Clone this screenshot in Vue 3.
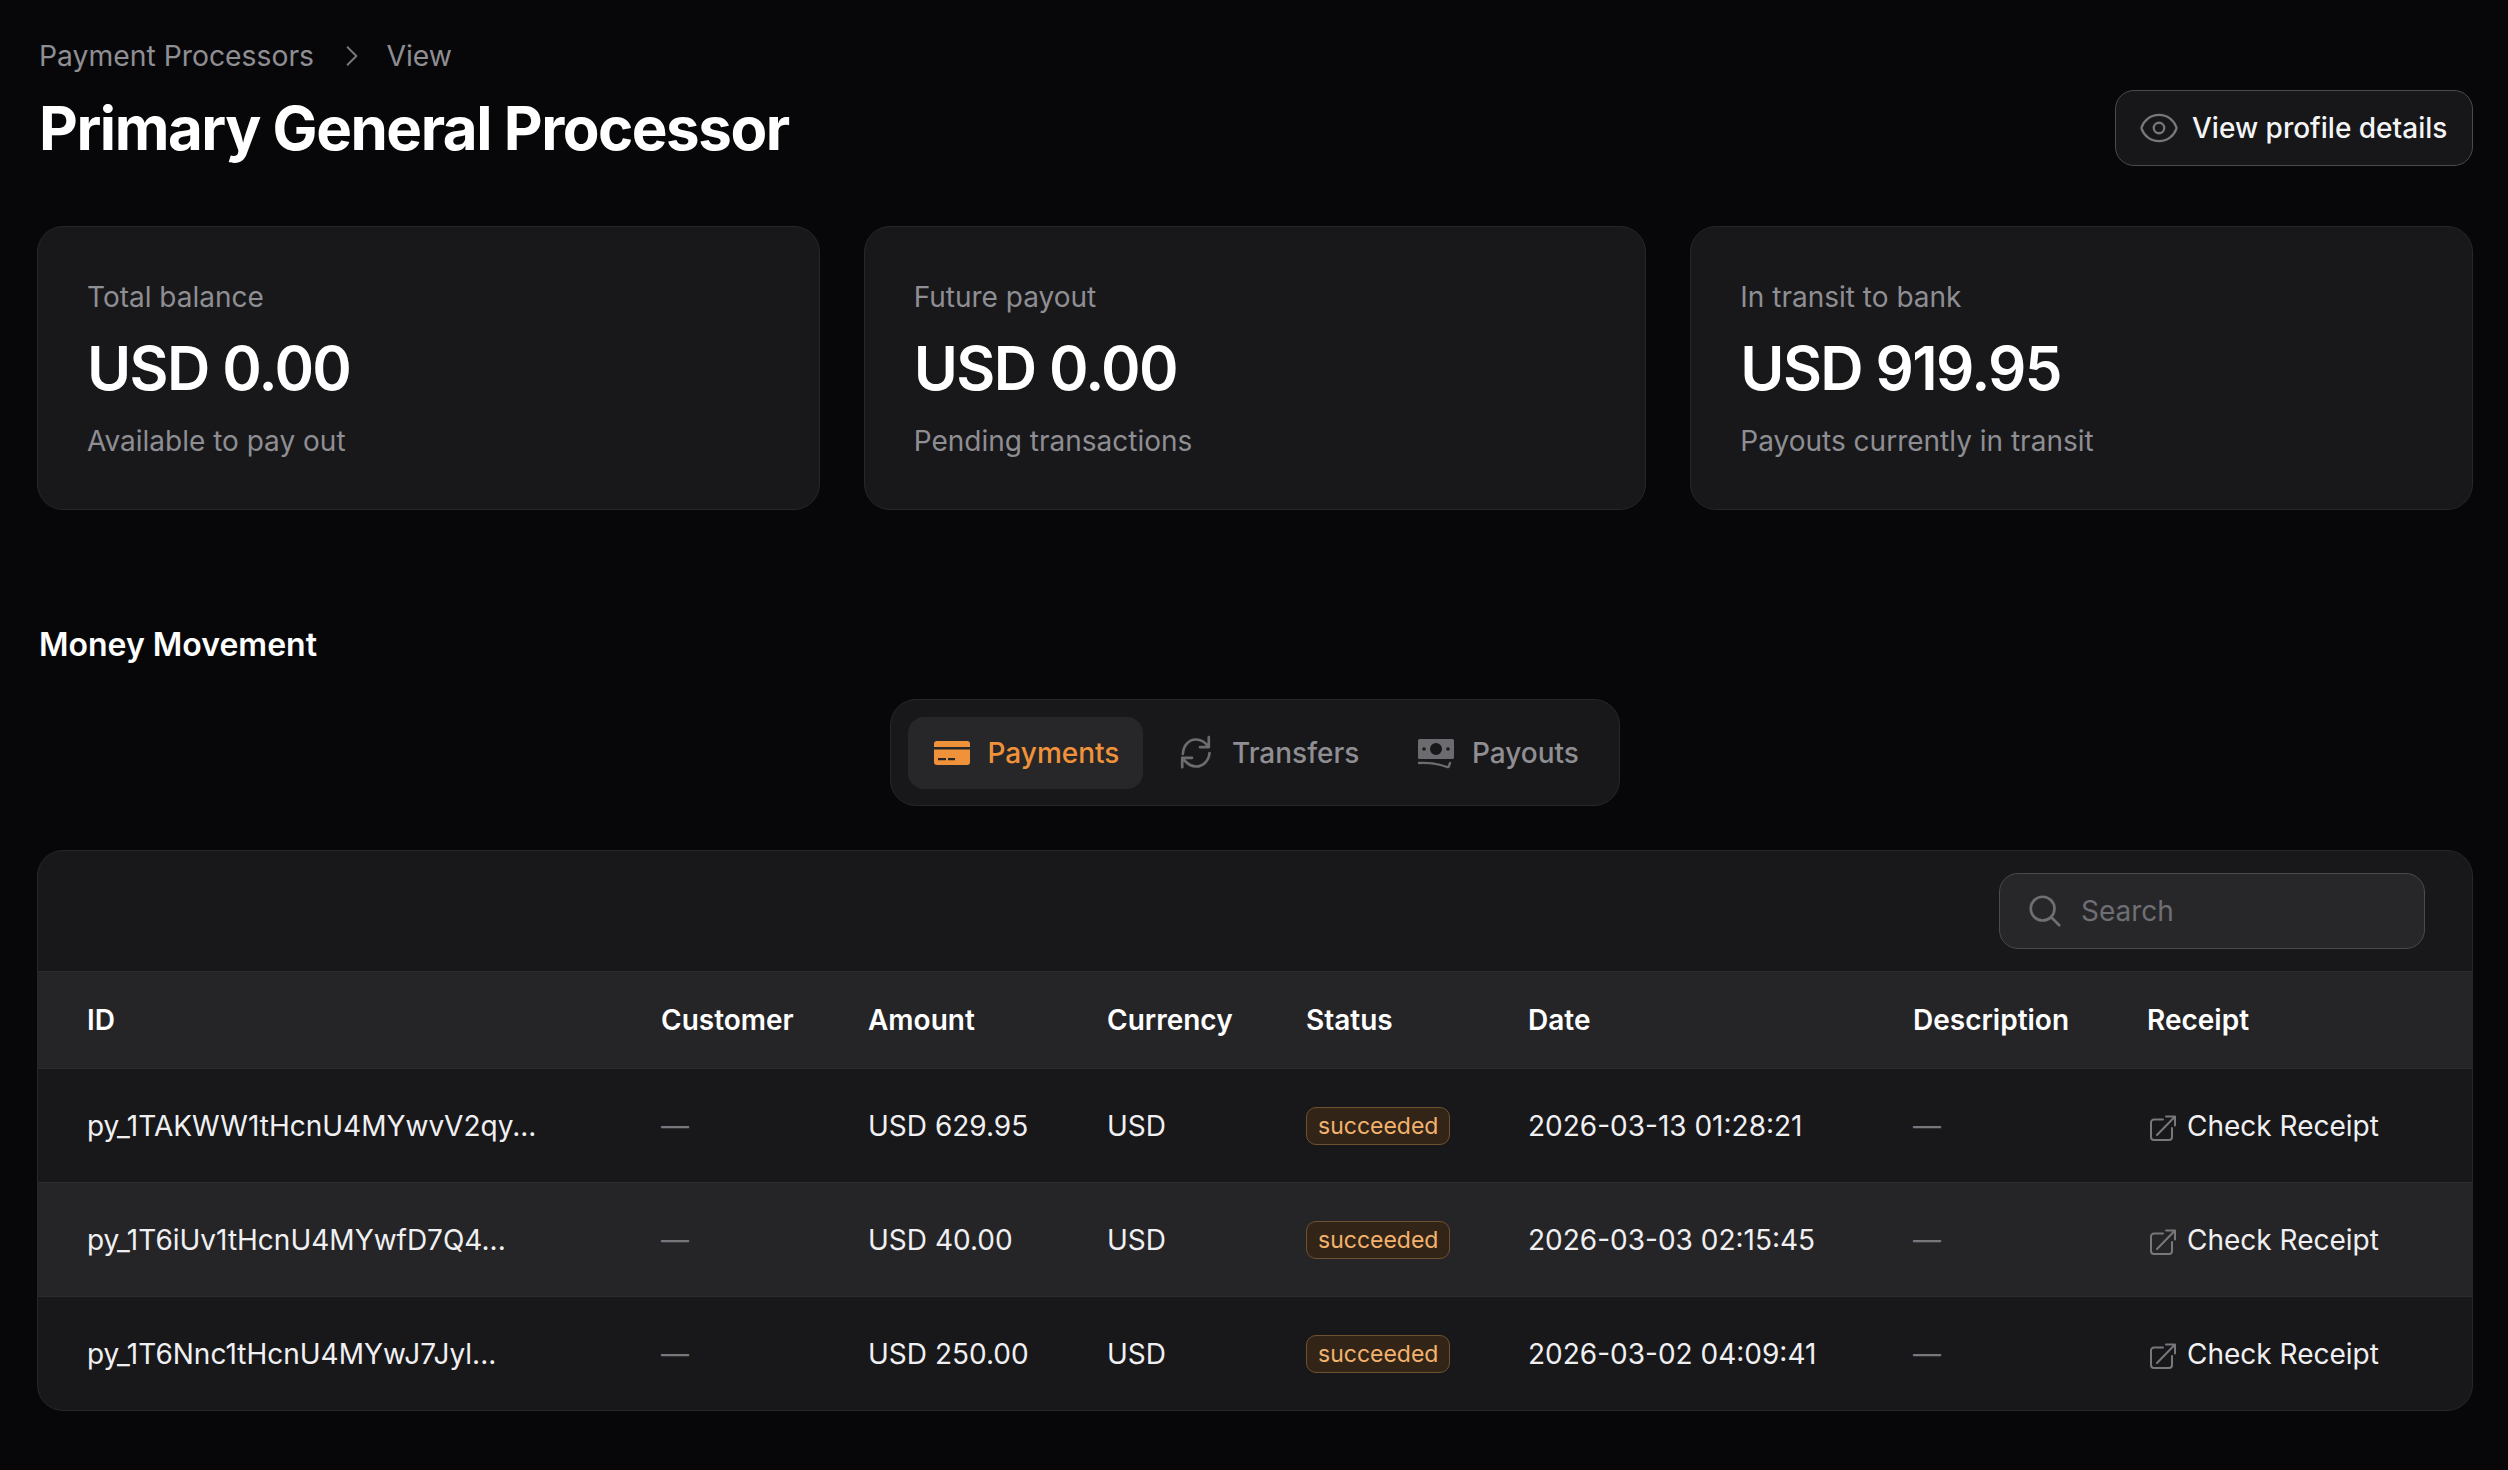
<script setup>
const cards = [
  { label: 'Total balance', value: 'USD 0.00', note: 'Available to pay out' },
  { label: 'Future payout', value: 'USD 0.00', note: 'Pending transactions' },
  { label: 'In transit to bank', value: 'USD 919.95', note: 'Payouts currently in transit' },
]
const headers = ['ID', 'Customer', 'Amount', 'Currency', 'Status', 'Date', 'Description', 'Receipt']
const rows = [
  { id: 'py_1TAKWW1tHcnU4MYwvV2qy...', amount: 'USD 629.95', date: '2026-03-13 01:28:21' },
  { id: 'py_1T6iUv1tHcnU4MYwfD7Q4...', amount: 'USD 40.00', date: '2026-03-03 02:15:45' },
  { id: 'py_1T6Nnc1tHcnU4MYwJ7Jyl...', amount: 'USD 250.00', date: '2026-03-02 04:09:41' },
]
</script>

<template>
  <div class="page">
    <div class="crumbs">
      <span>Payment Processors</span>
      <svg class="chev" viewBox="0 0 24 24" fill="none" stroke="currentColor" stroke-width="1.6" stroke-linecap="round" stroke-linejoin="round"><path d="M8.25 4.5l7.5 7.5-7.5 7.5" /></svg>
      <span>View</span>
    </div>
    <div class="head">
      <h1>Primary General Processor</h1>
      <button class="profile">
        <svg class="eye" viewBox="0 0 24 24" fill="none" stroke="currentColor" stroke-width="1.3" stroke-linecap="round" stroke-linejoin="round"><path d="M2.036 12.322a1.012 1.012 0 0 1 0-.639C3.423 7.51 7.36 4.5 12 4.5c4.638 0 8.573 3.007 9.963 7.178.07.207.07.431 0 .639C20.577 16.49 16.64 19.5 12 19.5c-4.638 0-8.573-3.007-9.963-7.178Z" /><path d="M15 12a3 3 0 1 1-6 0 3 3 0 0 1 6 0Z" /></svg>
        View profile details
      </button>
    </div>

    <div class="cards">
      <div v-for="c in cards" :key="c.label" class="card">
        <div class="label">{{ c.label }}</div>
        <div class="value">{{ c.value }}</div>
        <div class="note">{{ c.note }}</div>
      </div>
    </div>

    <h2>Money Movement</h2>

    <div class="tabs-wrap">
      <div class="tabs">
        <div class="tab active">
          <svg class="tico" viewBox="0 0 40 40" fill="currentColor"><path d="M5 8h30a3 3 0 0 1 3 3v3H2v-3a3 3 0 0 1 3-3Z" /><path fill-rule="evenodd" d="M2 16.500h36V29a3 3 0 0 1-3 3H5a3 3 0 0 1-3-3V16.500ZM6 25v2.300h8V25H6Zm10 0v2.300h7V25h-7Z" /></svg>
          Payments
        </div>
        <div class="tab">
          <svg class="tico" viewBox="0 0 40 40" fill="none" stroke="currentColor" stroke-width="2.700" stroke-linecap="round" stroke-linejoin="round"><path d="M6.800 20.800C7.500 12 13 6.500 20 6.500c5 0 9.500 3 12.800 7.700V4.200M32.800 14.200H24" /><path d="M33.500 20C32.800 28 27 33.500 20 33.500c-5 0-9.500-3-13.800-8.700v9.400M6.200 24.800H16" /></svg>
          Transfers
        </div>
        <div class="tab">
          <svg class="tico" viewBox="0 0 40 40" fill="currentColor"><path fill-rule="evenodd" d="M3.500 6h33A1.500 1.500 0 0 1 38 7.500v17a1.500 1.500 0 0 1-1.500 1.500h-33A1.500 1.500 0 0 1 2 24.500v-17A1.500 1.500 0 0 1 3.500 6ZM20 10a6 6 0 1 0 0 12 6 6 0 0 0 0-12ZM8 14.200a1.800 1.800 0 1 0 0 3.600 1.800 1.800 0 0 0 0-3.600Zm24 0a1.800 1.800 0 1 0 0 3.600 1.800 1.800 0 0 0 0-3.600Z" /><path d="M3 30c10-.5 20 1 28 4h1.500c.5-1 1-2 1.500-4" fill="none" stroke="currentColor" stroke-width="2.400" stroke-linecap="round" stroke-linejoin="round" /></svg>
          Payouts
        </div>
      </div>
    </div>

    <div class="panel">
      <div class="toolbar">
        <div class="search">
          <svg class="sico" viewBox="0 0 24 24" fill="none" stroke="currentColor" stroke-width="1.700" stroke-linecap="round" stroke-linejoin="round"><path d="m21 21-5.197-5.197m0 0A7.500 7.500 0 1 0 5.196 5.196a7.500 7.500 0 0 0 10.607 10.607Z" /></svg>
          <span>Search</span>
        </div>
      </div>
      <div class="row header">
        <div v-for="h in headers" :key="h">{{ h }}</div>
      </div>
      <div v-for="(r, i) in rows" :key="r.id" class="row body" :class="{ odd: i === 1 }">
        <div>{{ r.id }}</div>
        <div class="dash">—</div>
        <div>{{ r.amount }}</div>
        <div>USD</div>
        <div><span class="badge">succeeded</span></div>
        <div>{{ r.date }}</div>
        <div class="dash">—</div>
        <div class="receipt">
          <svg class="rico" viewBox="0 0 26 26" fill="none" stroke="currentColor" stroke-width="2" stroke-linecap="round" stroke-linejoin="round"><path d="M13 4.500H4a3 3 0 0 0-3 3V22a3 3 0 0 0 3 3h15a3 3 0 0 0 3-3v-9" /><path d="M7 20 25 1.500M16 1.500h9v9" /></svg>
          Check Receipt
        </div>
      </div>
    </div>
  </div>
</template>

<style>
html, body { background: #07070a; margin: 0; }
</style>

<style scoped>
.page {
  height: 1470px;
  box-sizing: border-box;
  padding: 38px 35px 0 37px;
  background: #07070a;
  font-family: Inter, "Noto Sans", sans-serif;
  color: #fff;
  overflow: hidden;
}
.crumbs {
  display: flex;
  align-items: center;
  height: 36px;
  padding-left: 2px;
  font-size: 28.3px;
  color: #8e8e93;
}
.chev { width: 28px; height: 28px; margin: 0 20.4px 0 24px; color: #77777c; }
.head {
  display: flex;
  justify-content: space-between;
  align-items: center;
  height: 76px;
  margin-top: 16px;
  padding-left: 2px;
}
h1 { margin: 0; font-size: 60px; font-weight: 700; letter-spacing: -1.46px; }
.profile {
  display: flex;
  align-items: center;
  gap: 12px;
  width: 358px;
  height: 76px;
  box-sizing: border-box;
  padding: 0 24px 0 22px;
  background: #17171a;
  border: 1.6px solid #4a4a4f;
  border-radius: 19px;
  color: #f4f4f5;
  font: 500 28px Inter, sans-serif;
  white-space: nowrap;
}
.eye { width: 42px; height: 42px; color: #77777c; flex: none; }
.cards {
  display: grid;
  grid-template-columns: repeat(3, 1fr);
  gap: 44px;
  margin-top: 60px;
}
.card {
  height: 284px;
  box-sizing: border-box;
  padding: 51.5px 48px 0 49px;
  background: #18181b;
  border: 1.6px solid #27272a;
  border-radius: 26px;
}
.label, .note { font-size: 28px; line-height: 36px; color: #8e8e93; }
.value { margin-top: 18.500px; margin-left: 0; font-size: 60px; line-height: 70px; font-weight: 600; letter-spacing: -1.6px; }
.note { margin-top: 19.500px; }
h2 { margin: 118px 0 0; padding-left: 2px; font-size: 32px; line-height: 34px; font-weight: 600; }
.tabs-wrap { display: flex; justify-content: center; margin-top: 37px; }
.tabs {
  display: flex;
  box-sizing: border-box;
  width: 730px;
  height: 107px;
  padding: 17px;
  background: #18181b;
  border: 1.6px solid #27272a;
  border-radius: 26px;
  gap: 9px;
}
.tab {
  display: flex;
  align-items: center;
  gap: 15.5px;
  height: 72px;
  padding: 0 24px;
  font-size: 28px;
  font-weight: 500;
  color: #8e8e93;
  white-space: nowrap;
}
.tab.active { background: #27272a; border-radius: 16px; color: #f0923a; }
.tico { width: 40px; height: 40px; color: #6b6b70; flex: none; }
.active .tico { color: #f0923a; }
.panel {
  margin-top: 44.4px;
  background: #18181b;
  border: 1.6px solid #27272a;
  border-radius: 26px;
  overflow: hidden;
}
.toolbar {
  display: flex;
  justify-content: flex-end;
  align-items: center;
  height: 119.6px;
  padding-right: 47px;
}
.search {
  display: flex;
  align-items: center;
  gap: 17px;
  width: 426px;
  height: 76px;
  box-sizing: border-box;
  padding-left: 26px;
  background: #27272a;
  border: 1.6px solid #4a4a4f;
  border-radius: 19px;
  color: #6e6e73;
  font-size: 28px;
}
.sico { width: 38px; height: 38px; flex: none; }
.row {
  display: grid;
  grid-template-columns: 574px 207px 239px 199px 222px 385px 234px 1fr;
  align-items: center;
  box-sizing: border-box;
  padding-left: 49px;
  border-top: 1.6px solid #2c2c30;
}
.header { height: 97.4px; background: #252528; font-size: 28px; font-weight: 600; }
.body { height: 114px; font-size: 28px; color: #f0f0f2; }
.odd { background: #252528; }
.dash { color: #77777c; }
.badge {
  display: inline-block;
  padding: 3px 11px;
  font-size: 23px;
  line-height: 30px;
  color: #f3b26d;
  background: #322518;
  border: 1.6px solid #70502f;
  border-radius: 10px;
}
.receipt { display: flex; align-items: center; gap: 11px; }
.rico { width: 26px; height: 26px; color: #77777c; flex: none; margin: 4px 0 0 3px; }
</style>
